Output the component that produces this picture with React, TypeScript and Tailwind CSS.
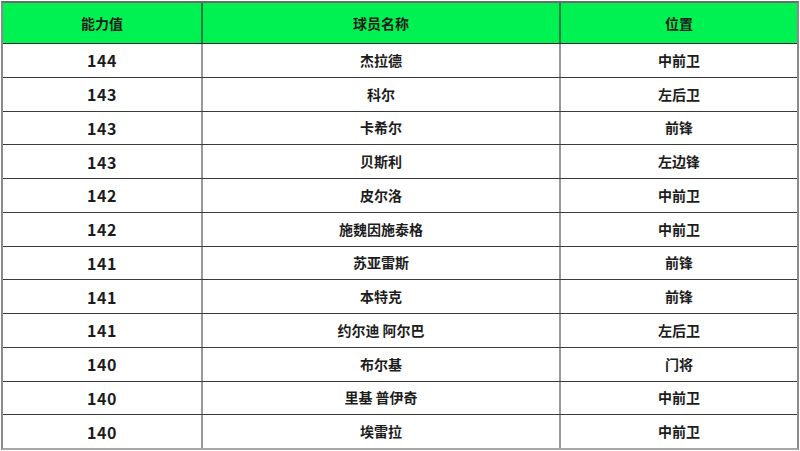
import React from "react";

const rows: [string, string, string][] = [
  ["144", "杰拉德", "中前卫"],
  ["143", "科尔", "左后卫"],
  ["143", "卡希尔", "前锋"],
  ["143", "贝斯利", "左边锋"],
  ["142", "皮尔洛", "中前卫"],
  ["142", "施魏因施泰格", "中前卫"],
  ["141", "苏亚雷斯", "前锋"],
  ["141", "本特克", "前锋"],
  ["141", "约尔迪 阿尔巴", "左后卫"],
  ["140", "布尔基", "门将"],
  ["140", "里基 普伊奇", "中前卫"],
  ["140", "埃雷拉", "中前卫"],
];

const font = { fontFamily: '"Noto Sans CJK SC", "Noto Sans", sans-serif' };

export default function App() {
  return (
    <div className="w-[800px] h-[451px] bg-white pl-[1px] pt-[1px]" style={font}>
      <div className="w-[798px] h-[449px] flex flex-col border-t-2 border-l-2 border-t-[#6b6b6b] border-l-[#8a8a8a] border-r-2 border-r-[#8a8a8a] border-b-2 border-b-[#a8a8a8] text-[#1c1c1c]">
        <div className="grid grid-cols-[198px_358px_1fr] h-[41px] shrink-0 bg-[#00f252] border-b border-[#2c2c2c]">
          <div className="flex items-center justify-center text-[14px] font-bold">能力值</div>
          <div className="flex items-center justify-center text-[14px] font-bold border-l-2 border-[#2f7a3f]">球员名称</div>
          <div className="flex items-center justify-center text-[14px] font-bold border-l-2 border-[#2f7a3f]">位置</div>
        </div>
        {rows.map((r, i) => (
          <div
            key={i}
            className={`grid grid-cols-[198px_358px_1fr] flex-1 ${i < rows.length - 1 ? "border-b border-[#3a3a3a]" : ""}`}
          >
            <div className="flex items-center justify-center text-[16px] font-bold tracking-[0.5px]">{r[0]}</div>
            <div className="flex items-center justify-center text-[14px] font-bold border-l-2 border-[#9a9a9a]">{r[1]}</div>
            <div className="flex items-center justify-center text-[14px] font-bold border-l-2 border-[#9a9a9a]">{r[2]}</div>
          </div>
        ))}
      </div>
    </div>
  );
}
